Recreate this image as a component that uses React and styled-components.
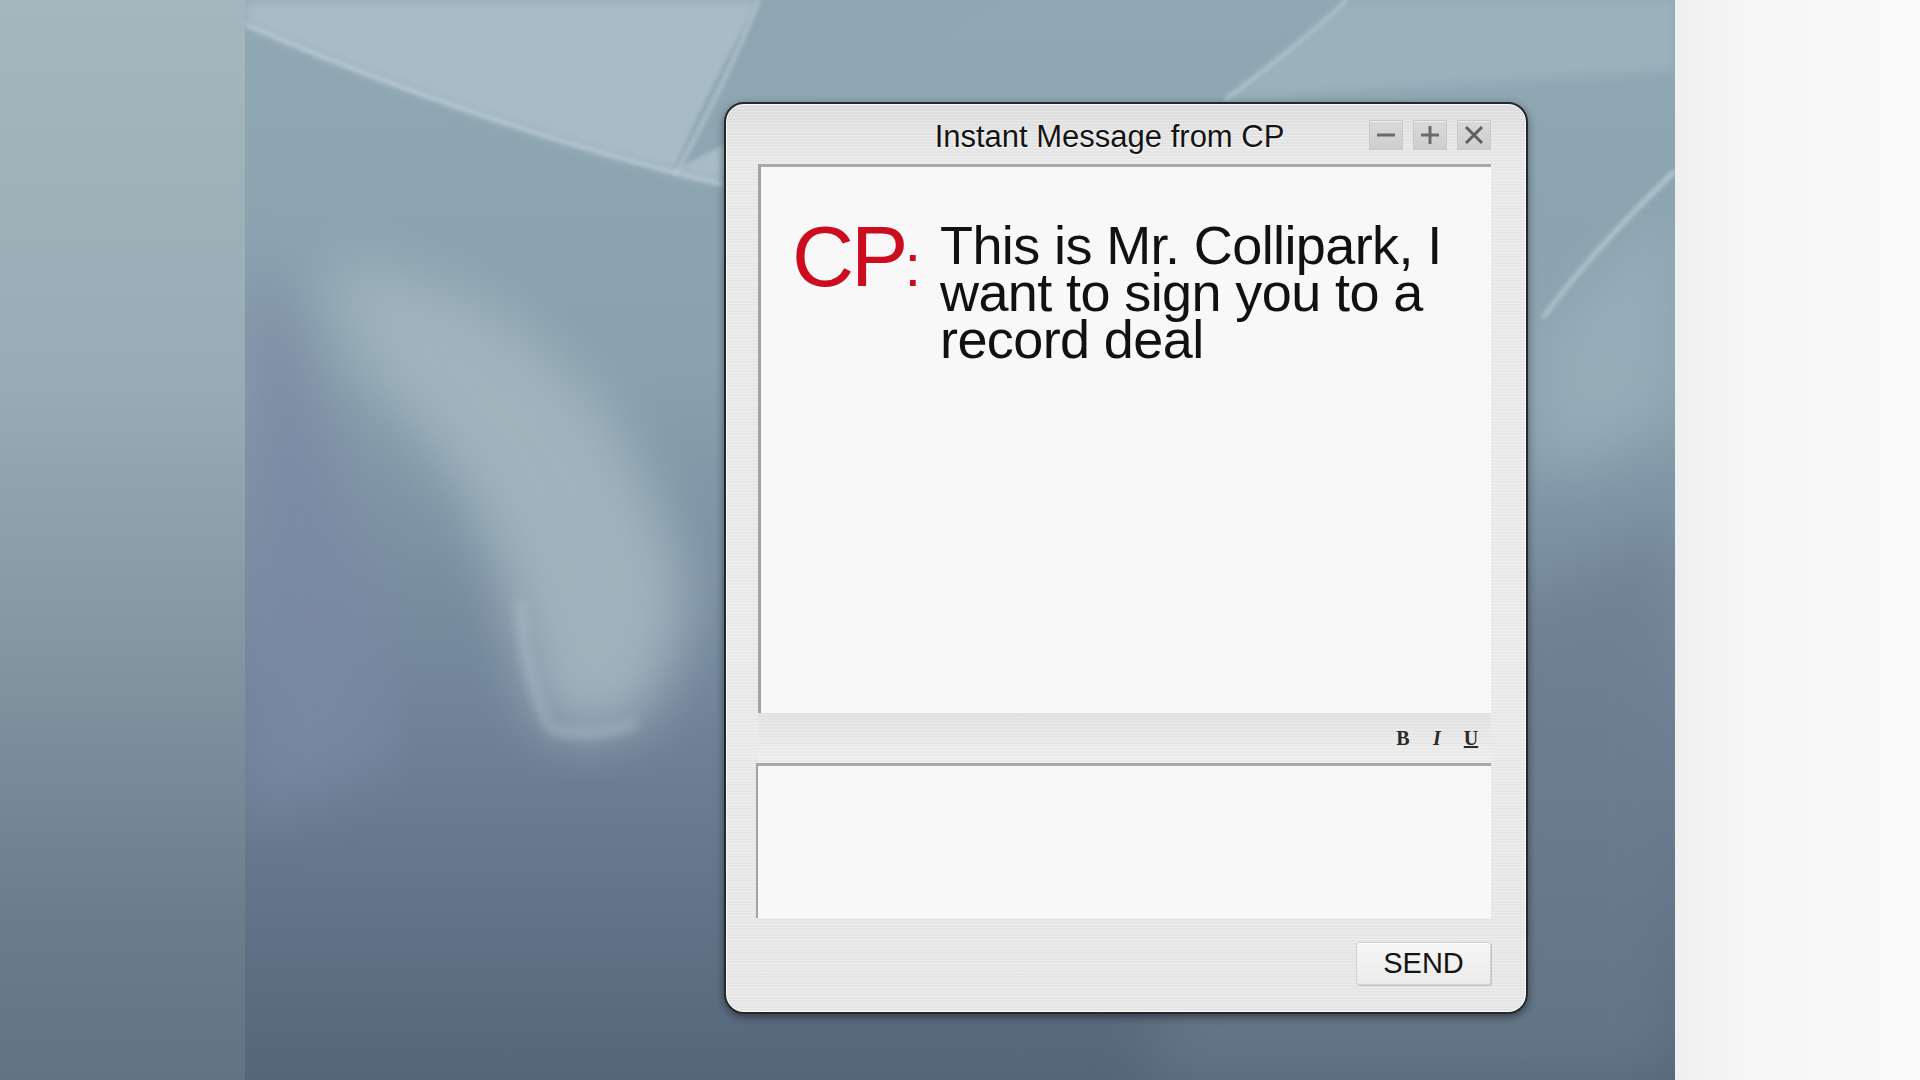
import React from "react";
import styled, { createGlobalStyle } from "styled-components";

const GlobalStyle = createGlobalStyle`
  html, body {
    margin: 0;
    padding: 0;
    background: #f4f4f4;
    font-family: "Liberation Sans", Arial, sans-serif;
  }
  #root {
    width: 1920px;
    height: 1080px;
  }
`;

const wallpaper = `
<svg xmlns='http://www.w3.org/2000/svg' width='1430' height='1080' viewBox='0 0 1430 1080'>
  <defs>
    <linearGradient id='base' x1='0' y1='0' x2='0' y2='1'>
      <stop offset='0' stop-color='#90a8b4'/>
      <stop offset='0.35' stop-color='#89a0ad'/>
      <stop offset='0.65' stop-color='#71849a'/>
      <stop offset='1' stop-color='#55667a'/>
    </linearGradient>
    <filter id='b1'><feGaussianBlur stdDeviation='28'/></filter>
    <filter id='b2'><feGaussianBlur stdDeviation='6'/></filter>
    <filter id='b3'><feGaussianBlur stdDeviation='2'/></filter>
  </defs>
  <rect width='1430' height='1080' fill='url(#base)'/>
  <path d='M0 260 C60 300 120 500 150 760 L0 820 Z' fill='#7a88a4' filter='url(#b1)' opacity='0.8'/>
  <path d='M1000 700 C1150 650 1300 600 1430 520 L1430 1080 L900 1080 Z' fill='#6a7d8c' filter='url(#b1)' opacity='0.6'/>
  <path d='M0 24 C150 90 330 150 477 184 L514 0 L0 0 Z' fill='#a7bcc6' filter='url(#b2)'/>
  <path d='M514 0 C480 60 450 120 428 171 L760 0 Z' fill='#8fa6b2' filter='url(#b3)'/>
  <path d='M0 24 C150 90 330 150 477 184' stroke='#c2d2d8' stroke-width='3' fill='none' filter='url(#b3)'/>
  <path d='M514 0 C490 60 460 120 430 175' stroke='#b8cad2' stroke-width='3' fill='none' filter='url(#b3)'/>
  <path d='M86 257 C160 270 210 290 245 306 C320 360 370 410 392 465 C420 520 445 570 441 612 C430 670 410 705 392 722 C360 735 330 735 306 729 C290 700 280 670 275 637 C260 580 240 530 220 490 C180 430 150 400 122 367 C100 330 90 290 86 257 Z' fill='#a1b5be' filter='url(#b1)' opacity='0.95'/>
  <path d='M275 600 C278 660 290 700 306 729 C340 738 370 732 392 722' stroke='#bccbd0' stroke-width='5' fill='none' filter='url(#b2)' opacity='0.8'/>
  <path d='M980 100 C1020 70 1060 40 1102 0 L1430 0 L1430 70 C1300 80 1100 90 980 100 Z' fill='#9bb1bc' filter='url(#b2)'/>
  <path d='M980 100 C1020 70 1060 40 1102 0' stroke='#b8cad2' stroke-width='3' fill='none' filter='url(#b3)'/>
  <path d='M1298 318 C1340 260 1390 210 1430 171' stroke='#bccdd4' stroke-width='4' fill='none' filter='url(#b3)'/>
  <path d='M1290 340 C1340 280 1390 240 1430 210 L1430 420 L1290 480 Z' fill='#9cb2bd' filter='url(#b1)' opacity='0.7'/>
</svg>`;

const Page = styled.div`
  display: flex;
  width: 1920px;
  height: 1080px;
  overflow: hidden;
`;

const SideStrip = styled.div`
  width: 245px;
  flex: none;
  background: ${(p) =>
    p.light
      ? "linear-gradient(90deg, #f0f0f0, #f6f6f6 30%, #fafafa)"
      : "linear-gradient(180deg, #a4b7bf 0%, #98acb5 35%, #8396a2 60%, #6b7d8b 85%, #627484 100%)"};
`;

const Desktop = styled.div`
  flex: 1;
  display: flex;
  align-items: flex-start;
  padding: 102px 0 0 479px;
  background-image: url("data:image/svg+xml,${encodeURIComponent(wallpaper)}");
  background-size: 100% 100%;
`;

const Window = styled.div`
  box-sizing: border-box;
  width: 804px;
  height: 912px;
  border: 2px solid #23282c;
  border-radius: 20px;
  display: flex;
  flex-direction: column;
  padding: 0 35px 0 32px;
  background:
    repeating-linear-gradient(0deg, rgba(255, 255, 255, 0.22) 0 1px, rgba(0, 0, 0, 0.012) 1px 3px),
    linear-gradient(180deg, #dedede 0%, #e9e9e9 6%, #ebebeb 60%, #e7e7e7 100%);
  box-shadow: 0 3px 8px rgba(0, 0, 0, 0.45), inset 0 0 0 1px rgba(255, 255, 255, 0.8);
`;

const TitleBar = styled.div`
  height: 60px;
  display: flex;
  align-items: center;
  gap: 10px;
`;

const Title = styled.div`
  flex: 1;
  text-align: center;
  padding-left: 102px;
  font-size: 31px;
  color: #141414;
  text-shadow: 0 1px 0 #ffffff, 0 0 2px rgba(255, 255, 255, 0.9);
  margin-top: 6px;
`;

const Controls = styled.div`
  display: flex;
  gap: 10px;
  margin-top: 2px;
`;

const CtrlButton = styled.div`
  width: 34px;
  height: 30px;
  display: flex;
  align-items: center;
  justify-content: center;
  box-sizing: border-box;
  border: 1px solid #c9c9c9;
  background: linear-gradient(180deg, #d9d9d9, #cfcfcf);
  box-shadow: inset 0 1px 0 rgba(255, 255, 255, 0.6);
`;

const ChatArea = styled.div`
  height: 549px;
  box-sizing: border-box;
  background: #f8f8f8;
  border-top: 3px solid #a9a9a9;
  border-left: 3px solid #a3a3a3;
  display: flex;
  align-items: flex-start;
  padding: 46px 0 0 31px;
`;

const Sender = styled.div`
  font-size: 86px;
  line-height: 86px;
  letter-spacing: -3px;
  color: #cc0c1f;
  width: 148px;
  flex: none;
`;

const Colon = styled.span`
  font-size: 60px;
  letter-spacing: 0;
  margin-left: -1px;
`;

const Message = styled.div`
  width: 540px;
  margin-top: 9px;
  font-size: 54px;
  line-height: 47px;
  letter-spacing: -0.6px;
  color: #111111;
`;

const FormatRow = styled.div`
  height: 50px;
  display: flex;
  align-items: center;
  justify-content: flex-end;
  gap: 18px;
  padding-right: 12px;
  background: linear-gradient(180deg, rgba(0, 0, 0, 0.03), rgba(255, 255, 255, 0.2));
`;

const FormatButton = styled.span`
  font-family: "Liberation Serif", "Times New Roman", serif;
  font-size: 20px;
  font-weight: bold;
  color: #2a2a2a;
  font-style: ${(p) => (p.italic ? "italic" : "normal")};
  text-decoration: ${(p) => (p.underline ? "underline" : "none")};
  width: 16px;
  text-align: center;
`;

const InputArea = styled.div`
  height: 155px;
  box-sizing: border-box;
  margin-left: -2px;
  background: #f8f8f8;
  border-top: 3px solid #a9a9a9;
  border-left: 2px solid #a3a3a3;
`;

const BottomBar = styled.div`
  flex: 1;
  display: flex;
  justify-content: flex-end;
  align-items: flex-start;
  padding-top: 24px;
`;

const SendButton = styled.div`
  width: 135px;
  height: 43px;
  box-sizing: border-box;
  display: flex;
  align-items: center;
  justify-content: center;
  font-size: 29px;
  color: #141414;
  border: 1px solid #d2d2d2;
  border-radius: 3px;
  background: linear-gradient(180deg, #f6f6f6, #ebebeb);
  box-shadow: 1px 1px 0 #c4c4c4, inset 0 1px 0 #ffffff;
`;

const Icon = ({ kind }) => (
  <svg width="22" height="22" viewBox="0 0 22 22">
    {kind !== "close" && (
      <line x1="2" y1="11" x2="20" y2="11" stroke="#6b6b6b" strokeWidth="3" />
    )}
    {kind === "plus" && (
      <line x1="11" y1="2" x2="11" y2="20" stroke="#6b6b6b" strokeWidth="3" />
    )}
    {kind === "close" && (
      <g stroke="#5f5f5f" strokeWidth="3">
        <line x1="3" y1="3" x2="19" y2="19" />
        <line x1="19" y1="3" x2="3" y2="19" />
      </g>
    )}
  </svg>
);

export default function App() {
  return (
    <>
      <GlobalStyle />
      <Page>
        <SideStrip />
        <Desktop>
          <Window>
            <TitleBar>
              <Title>Instant Message from CP</Title>
              <Controls>
                <CtrlButton><Icon kind="min" /></CtrlButton>
                <CtrlButton><Icon kind="plus" /></CtrlButton>
                <CtrlButton><Icon kind="close" /></CtrlButton>
              </Controls>
            </TitleBar>
            <ChatArea>
              <Sender>CP<Colon>:</Colon></Sender>
              <Message>This is Mr. Collipark, I want to sign you to a record deal</Message>
            </ChatArea>
            <FormatRow>
              <FormatButton>B</FormatButton>
              <FormatButton italic>I</FormatButton>
              <FormatButton underline>U</FormatButton>
            </FormatRow>
            <InputArea />
            <BottomBar>
              <SendButton>SEND</SendButton>
            </BottomBar>
          </Window>
        </Desktop>
        <SideStrip light />
      </Page>
    </>
  );
}
